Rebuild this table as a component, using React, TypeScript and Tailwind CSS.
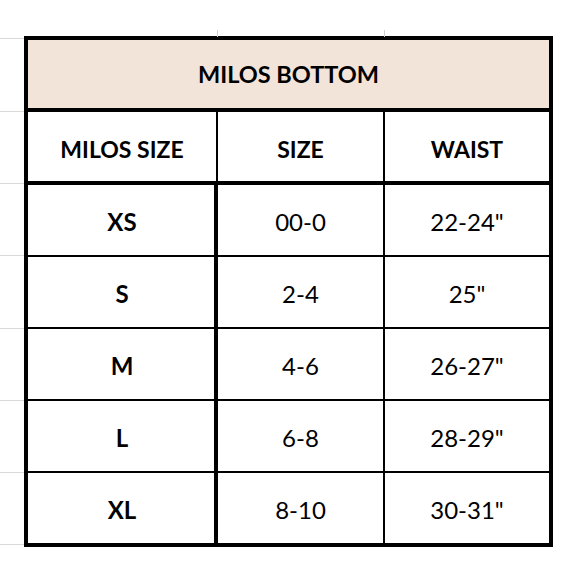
const rows = [
    { milos: 'XS', size: '00-0', waist: '22-24"' },
    { milos: 'S', size: '2-4', waist: '25"' },
    { milos: 'M', size: '4-6', waist: '26-27"' },
    { milos: 'L', size: '6-8', waist: '28-29"' },
    { milos: 'XL', size: '8-10', waist: '30-31"' },
];

const App = () => {
    return (
        <div
            className="relative w-[580px] h-[580px] bg-white text-black"
            style={{ fontFamily: 'Lato, "Open Sans", sans-serif' }}
        >
            {/* faint spreadsheet gridlines on the left */}
            <div className="absolute left-0 top-[38px] w-[24px] flex flex-col">
                {[0, 73, 145, 217, 290, 362, 434, 506].map((y) => (
                    <div key={y} className="absolute left-0 h-px w-[24px] bg-[#d9d9d9]" style={{ top: y }} />
                ))}
            </div>
            <div className="absolute left-[217px] top-[30px] h-[7px] w-px bg-[#d0d0d0]" />
            <div className="absolute left-[384px] top-[30px] h-[7px] w-px bg-[#d0d0d0]" />

            <div className="pt-[36px] pl-[24px]">
                <div className="w-[529px] border-[4px] border-black">
                    <div className="h-[72px] border-b-[4px] border-black bg-[#f3e4da] flex items-center justify-center">
                        <span className="text-[23.5px] font-bold pt-[2px]">MILOS BOTTOM</span>
                    </div>
                    <div className="h-[73px] border-b-[4px] border-black grid grid-cols-[190px_167px_1fr] text-[23px] font-bold">
                        <div className="border-r-2 border-black flex items-center justify-center pt-[6px]">MILOS SIZE</div>
                        <div className="border-r-2 border-black flex items-center justify-center pt-[6px]">SIZE</div>
                        <div className="flex items-center justify-center pt-[6px]">WAIST</div>
                    </div>
                    {rows.map((r, i) => (
                        <div
                            key={r.milos}
                            className={`grid grid-cols-[190px_167px_1fr] text-[24px] ${i < rows.length - 1 ? 'h-[72px] border-b-2 border-black' : 'h-[70px]'}`}
                        >
                            <div className="border-r-[4px] border-black flex items-center justify-center font-bold pl-[2px] pt-[3px]">{r.milos}</div>
                            <div className="border-r-2 border-black flex items-center justify-center pt-[3px]">{r.size}</div>
                            <div className="flex items-center justify-center pt-[3px]">{r.waist}</div>
                        </div>
                    ))}
                </div>
            </div>
        </div>
    );
};

export default App;
